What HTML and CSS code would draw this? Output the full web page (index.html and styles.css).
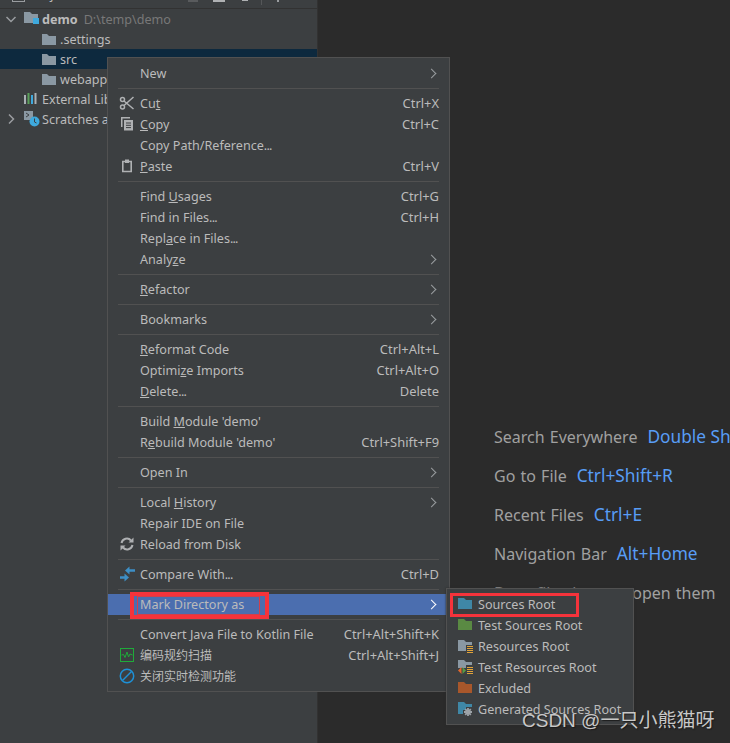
FILE: index.html
```html
<!DOCTYPE html>
<html lang="en">
<head>
<meta charset="utf-8">
<title>IDE context menu</title>
<link rel="stylesheet" href="styles.css">
</head>
<body>
<div class="ide">
  <aside class="panel">
    <div class="toolbar">
      <span class="tb-box"></span>
      <span class="tb-title">Project</span>
      <span class="tb-spacer"></span>
      <span class="tb-circle"></span>
      <span class="tb-wide"></span>
      <span class="tb-small"></span>
      <span class="tb-sep"></span>
      <span class="tb-dot"></span>
    </div>
    <div class="tree">
      <div class="row lvl0">
        <svg class="arrow" width="12" height="12" viewBox="0 0 12 12"><path d="M1.500 4l4.500 4.500L10.500 4" fill="none" stroke="#9a9da0" stroke-width="1.500"/></svg>
        <svg class="ticon" width="16" height="16" viewBox="0 0 16 16"><path d="M0 1h6l2 2h6v9H0z" fill="#8a98a3"/><rect x="9" y="7" width="6" height="6" fill="#3ea9dd"/></svg>
        <b class="bold">demo</b><span class="path">D:\temp\demo</span>
      </div>
      <div class="row lvl1"><svg class="ticon" width="15" height="13" viewBox="0 0 15 13"><path d="M0 1h5l2 2h7v9H0z" fill="#8a98a3"/></svg><span>.settings</span></div>
      <div class="row lvl1 sel"><svg class="ticon" width="15" height="13" viewBox="0 0 15 13"><path d="M0 1h5l2 2h7v9H0z" fill="#8a98a3"/></svg><span>src</span></div>
      <div class="row lvl1"><svg class="ticon" width="15" height="13" viewBox="0 0 15 13"><path d="M0 1h5l2 2h7v9H0z" fill="#8a98a3"/></svg><span>webapp</span></div>
      <div class="row lvl0 noarrow"><svg class="ticon" width="16" height="14" viewBox="0 0 16 14"><path d="M0 3h2v9H0z" fill="#a9b0b5"/><path d="M3.500 1h2v11h-2z" fill="#5aa05a"/><path d="M7 3h2v9H7z" fill="#3ea9dd"/><path d="M10.500 1h2v11h-2z" fill="#a9b0b5"/></svg><span>External Libraries</span></div>
      <div class="row lvl0">
        <svg class="arrow" width="12" height="12" viewBox="0 0 12 12"><path d="M4 1.500L8.500 6 4 10.500" fill="none" stroke="#9a9da0" stroke-width="1.500"/></svg>
        <svg class="ticon" width="16" height="16" viewBox="0 0 16 16"><path d="M0 0h9v9H0z" fill="#8a98a3"/><path d="M2 2l3 2-3 2" fill="none" stroke="#3c3f41"/><circle cx="10.500" cy="10.500" r="5" fill="#3ea9dd"/><path d="M10.500 7.500v3.500l2 1" fill="none" stroke="#3c3f41"/></svg>
        <span>Scratches and Consoles</span>
      </div>
    </div>
  </aside>
  <main class="welcome">
    <p class="hint">Search Everywhere<a>Double Shift</a></p>
    <p class="hint">Go to File<a>Ctrl+Shift+R</a></p>
    <p class="hint">Recent Files<a>Ctrl+E</a></p>
    <p class="hint">Navigation Bar<a>Alt+Home</a></p>
    <p class="hint">Drop files here to open them</p>
  </main>
</div>

<nav class="menu main-menu">
  <div class="item"><span class="label">New</span><i class="chev"></i></div>
  <hr>
  <div class="item">
    <svg class="ic" width="16" height="16" viewBox="0 0 16 16"><g fill="none" stroke="#afb1b3" stroke-width="1.500"><circle cx="3.500" cy="12" r="2"/><circle cx="3.500" cy="4.500" r="2"/><path d="M5 10.500L14.500 2M5 6L14.500 14"/></g></svg>
    <span class="label">Cu<u>t</u></span><span class="key">Ctrl+X</span></div>
  <div class="item">
    <svg class="ic" width="16" height="16" viewBox="0 0 16 16"><path d="M2 1h9v1.500H3.500V11H2z" fill="#afb1b3"/><path d="M5 4h9v10.500H5z" fill="#afb1b3"/><path d="M7 7h5M7 9.300h5M7 11.600h5" stroke="#3c3f41"/></svg>
    <span class="label"><u>C</u>opy</span><span class="key">Ctrl+C</span></div>
  <div class="item"><span class="label">Copy Path/Reference<span class="dots">...</span></span></div>
  <div class="item">
    <svg class="ic" width="16" height="16" viewBox="0 0 16 16"><path d="M3.800 3.500h8.400v10H3.800z" fill="none" stroke="#afb1b3" stroke-width="1.600"/><path d="M6 1.500h4v3.500H6z" fill="#afb1b3"/></svg>
    <span class="label"><u>P</u>aste</span><span class="key">Ctrl+V</span></div>
  <hr>
  <div class="item"><span class="label">Find <u>U</u>sages</span><span class="key">Ctrl+G</span></div>
  <div class="item"><span class="label">Find in Files<span class="dots">...</span></span><span class="key">Ctrl+H</span></div>
  <div class="item"><span class="label">Repl<u>a</u>ce in Files<span class="dots">...</span></span></div>
  <div class="item"><span class="label">Analy<u>z</u>e</span><i class="chev"></i></div>
  <hr>
  <div class="item"><span class="label"><u>R</u>efactor</span><i class="chev"></i></div>
  <hr>
  <div class="item"><span class="label">Bookmarks</span><i class="chev"></i></div>
  <hr>
  <div class="item"><span class="label"><u>R</u>eformat Code</span><span class="key">Ctrl+Alt+L</span></div>
  <div class="item"><span class="label">Optimi<u>z</u>e Imports</span><span class="key">Ctrl+Alt+O</span></div>
  <div class="item"><span class="label"><u>D</u>elete<span class="dots">...</span></span><span class="key">Delete</span></div>
  <hr>
  <div class="item"><span class="label">Build <u>M</u>odule 'demo'</span></div>
  <div class="item"><span class="label">R<u>e</u>build Module 'demo'</span><span class="key">Ctrl+Shift+F9</span></div>
  <hr>
  <div class="item"><span class="label">Open In</span><i class="chev"></i></div>
  <hr>
  <div class="item"><span class="label">Local <u>H</u>istory</span><i class="chev"></i></div>
  <div class="item"><span class="label">Repair IDE on File</span></div>
  <div class="item">
    <svg class="ic" width="16" height="16" viewBox="0 0 16 16"><g fill="none" stroke="#afb1b3" stroke-width="2"><path d="M2.500 7a5.500 5.500 0 0 1 9.500-2.500"/><path d="M13.500 9a5.500 5.500 0 0 1-9.500 2.500"/></g><path d="M9.500 6.500h5V1.500zM6.500 9.500h-5v5z" fill="#afb1b3"/></svg>
    <span class="label">Reload from Disk</span></div>
  <hr>
  <div class="item">
    <svg class="ic" width="16" height="16" viewBox="0 0 16 16"><path d="M16 4.500H9M1 11.500h6" stroke="#3d8fc6" stroke-width="2.400"/><path d="M6 4.500L10.500 0.500v8zM10 11.500L5.500 7.500v8z" fill="#3d8fc6"/></svg>
    <span class="label">Compare With<span class="dots">...</span></span><span class="key">Ctrl+D</span></div>
  <hr>
  <div class="item active"><span class="label">Mark Directory as</span><i class="chev"></i></div>
  <hr>
  <div class="item"><span class="label">Convert Java File to Kotlin File</span><span class="key">Ctrl+Alt+Shift+K</span></div>
  <div class="item">
    <svg class="ic" width="16" height="16" viewBox="0 0 16 16"><rect x="1.500" y="1.500" width="13" height="13" fill="none" stroke="#1faa3a"/><path d="M2.500 8l2-.5 1.500 3 2-5.500 1.500 5 1.500-3 2.500 1" fill="none" stroke="#1faa3a"/></svg>
    <span class="label cjk">编码规约扫描</span><span class="key">Ctrl+Alt+Shift+J</span></div>
  <div class="item">
    <svg class="ic" width="16" height="16" viewBox="0 0 16 16"><g fill="none" stroke="#1e90d6" stroke-width="1.500"><circle cx="8" cy="8" r="6.700"/><path d="M3.500 12.500l9-9"/></g></svg>
    <span class="label cjk">关闭实时检测功能</span></div>
</nav>

<nav class="menu sub-menu">
  <div class="item"><svg class="ic" width="16" height="16" viewBox="0 0 16 16"><path d="M1 2h6l2 2h6v9H1z" fill="#3f87a6"/></svg><span class="label">Sources Root</span></div>
  <div class="item"><svg class="ic" width="16" height="16" viewBox="0 0 16 16"><path d="M1 2h6l2 2h6v9H1z" fill="#5a8a43"/></svg><span class="label">Test Sources Root</span></div>
  <div class="item"><svg class="ic" width="16" height="16" viewBox="0 0 16 16"><path d="M1 2h6l2 2h6v3H9v6H1z" fill="#8a98a3"/><path d="M10 8.500h6M10 10.500h6M10 12.500h6M10 14.500h6" stroke="#e0a33a"/></svg><span class="label">Resources Root</span></div>
  <div class="item"><svg class="ic" width="16" height="16" viewBox="0 0 16 16"><path d="M1 1h6l2 2h6v3H9v3H1z" fill="#8a98a3"/><path d="M10 8.500h6M10 10.500h6M10 12.500h6M10 14.500h6" stroke="#e0a33a"/><path d="M4.500 8L1 11.500 4.500 15z" fill="#e4672d"/><path d="M5.500 8v7L9 11.500z" fill="#5a9a43"/></svg><span class="label">Test Resources Root</span></div>
  <div class="item"><svg class="ic" width="16" height="16" viewBox="0 0 16 16"><path d="M1 2h6l2 2h6v9H1z" fill="#a8572b"/></svg><span class="label">Excluded</span></div>
  <div class="item"><svg class="ic" width="16" height="16" viewBox="0 0 16 16"><path d="M1 1h6l2 2h6v3H9v3H6v4H1z" fill="#3f87a6"/><g stroke="#9da3a8" stroke-width="1.800"><path d="M7 11h8M11 7v8M8.200 8.200l5.600 5.600M13.800 8.200l-5.600 5.600"/></g></svg><span class="label">Generated Sources Root</span></div>
</nav>

<div class="redbox box-mark-outer"></div>
<div class="redbox box-mark-inner"></div>
<div class="redbox box-sources"></div>
<div class="watermark">CSDN @一只小熊猫呀</div>
</body>
</html>
```
FILE: styles.css
```css
* { box-sizing: border-box; }
html, body { margin: 0; height: 100%; overflow: hidden; }
body {
  width: 730px; height: 743px; position: relative;
  font-family: "Noto Sans", "Noto Sans CJK SC", sans-serif;
  font-size: 12.6px; color: #bbbbbb; background: #2b2b2b;
}
.ide { display: flex; height: 743px; }
.panel { width: 318px; flex: none; background: #3c3f41; border-right: 1px solid #323232; }
.toolbar { height: 9px; display: flex; align-items: flex-start; padding-left: 12px; border-bottom: 1px solid #323232; overflow: hidden; }
.tb-box { width: 13px; height: 2px; border: 1px solid #9a9da0; border-top: 0; }
.tb-title { margin: -14px 0 0 5px; line-height: 18px; }
.tb-spacer { flex: 1; }
.tb-circle { width: 10px; height: 2px; background: #595b5d; margin-right: 15px; }
.tb-wide { width: 12px; height: 2px; background: #afb1b3; margin-right: 17px; }
.tb-small { width: 6px; height: 1px; background: #afb1b3; margin-right: 13px; }
.tb-sep { width: 1px; height: 5px; background: #555759; margin-right: 15px; }
.tb-dot { width: 2px; height: 2px; background: #9a9da0; margin-right: 38px; }
.row { height: 20px; display: flex; align-items: center; white-space: nowrap; line-height: 20px; }
.row span, .row b { padding-top: 2px; }
.lvl0 { padding-left: 5px; }
.lvl0.noarrow { padding-left: 24px; }
.lvl1 { padding-left: 42px; }
.arrow { margin-right: 7px; flex: none; }
.ticon { flex: none; margin-right: 2px; }
.lvl1 .ticon { margin-right: 3px; }
.sel { background: #0d293e; }
.bold { font-weight: 700; }
.path { color: #787878; margin-left: 6px; }
.welcome { flex: 1; padding: 426px 0 0 176px; white-space: nowrap; overflow: hidden; font-size: 16px; word-spacing: 1px; color: #a0a0a0; }
.hint { margin: 0 0 17px; height: 22px; line-height: 22px; }
.hint a { color: #589df6; margin-left: 10px; font-size: 17.3px; word-spacing: 0; }
.menu { position: absolute; background: #3c3f41; border: 1px solid #515151; padding: 5px 0; }
.main-menu { left: 107px; top: 57px; width: 343px; height: 635px; }
.sub-menu { left: 446px; top: 588px; width: 188px; height: 137px; box-shadow: 0 0 2px #2b2b2b; }
.item { height: 21px; display: flex; align-items: center; padding: 0 10px 0 32px; position: relative; white-space: nowrap; line-height: 21px; }
.sub-menu .item { padding-left: 31px; }
.ic { position: absolute; left: 11px; top: 2px; }
.sub-menu .ic { left: 10px; }
.label { flex: 1; }
.key { margin-left: 16px; font-size: 12.9px; }
.cjk { font-size: 12px; }
.dots { letter-spacing: -0.8px; }
hr { border: 0; height: 1px; background: #515151; margin: 4px 10px; }
.chev { width: 7px; height: 7px; border-top: 1.300px solid #9a9da0; border-right: 1.300px solid #9a9da0; transform: rotate(45deg); margin-right: 4px; }
.active { background: #4b6eaf; }
.active .chev { border-color: #ffffff; }
.redbox { position: absolute; pointer-events: none; }
.box-mark-outer { left: 130px; top: 592px; width: 139px; height: 27px; border: 4px solid #f5333b; }
.box-mark-inner { left: 137px; top: 596px; width: 123px; height: 19px; border: 1px solid #d0404c; }
.box-sources { left: 450px; top: 593px; width: 129px; height: 24px; border: 3px solid #f5333b; }
.watermark { position: absolute; left: 522px; top: 708px; font-size: 19px; line-height: 26px; color: #c8c8c8; white-space: nowrap; font-family: "Liberation Sans", "Noto Sans CJK SC", sans-serif; text-shadow: 1px 1px 1px #1c1c1c; }
```
